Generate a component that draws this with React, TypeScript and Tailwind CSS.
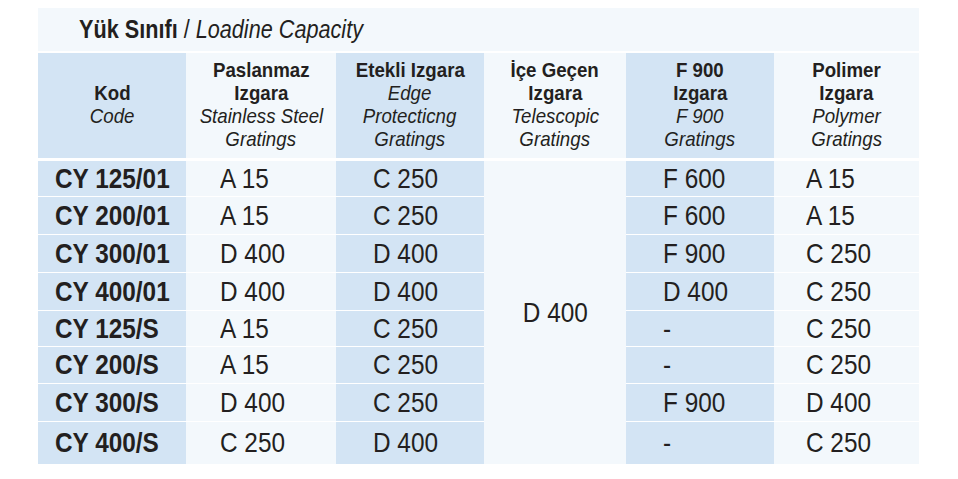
import React from "react";

const rows: [string, string, string, string, string][] = [
  ["CY 125/01", "A 15", "C 250", "F 600", "A 15"],
  ["CY 200/01", "A 15", "C 250", "F 600", "A 15"],
  ["CY 300/01", "D 400", "D 400", "F 900", "C 250"],
  ["CY 400/01", "D 400", "D 400", "D 400", "C 250"],
  ["CY 125/S", "A 15", "C 250", "-", "C 250"],
  ["CY 200/S", "A 15", "C 250", "-", "C 250"],
  ["CY 300/S", "D 400", "C 250", "F 900", "D 400"],
  ["CY 400/S", "C 250", "D 400", "-", "C 250"],
];

const font = { fontFamily: '"Liberation Sans", Arial, sans-serif' };

function Head({ bold, italic, blue }: { bold: string[]; italic: string[]; blue: boolean }) {
  return (
    <div
      className={`flex flex-col items-center justify-center pb-[3px] text-center leading-[23px] whitespace-nowrap ${
        blue ? "bg-[#d3e4f4]" : "bg-[#f3f8fc]"
      }`}
    >
      {bold.map((b) => (
        <div key={b} className="font-bold text-[21px] inline-block scale-x-[0.89] origin-center">
          {b}
        </div>
      ))}
      {italic.map((i) => (
        <div key={i} className="italic text-[21px] inline-block scale-x-[0.89] origin-center">
          {i}
        </div>
      ))}
    </div>
  );
}

function Cell({ text, className }: { text: string; className: string }) {
  return (
    <div className={`flex items-center whitespace-nowrap ${className}`}>
      <span className="inline-block scale-x-[0.87] origin-left">{text}</span>
    </div>
  );
}

export default function App() {
  return (
    <div className="w-[958px] h-[479px] bg-white pt-[8px] pl-[38px] text-[#231f20]" style={font}>
      <div className="w-[881px]">
        <div className="h-[43px] bg-[#f3f8fc] flex items-center pl-[41px] text-[25px] whitespace-nowrap">
          <span className="inline-block scale-x-[0.866] origin-left">
            <span className="font-bold">Yük Sınıfı</span>
            <span className="whitespace-pre"> / </span>
            <span className="italic">Loadine Capacity</span>
          </span>
        </div>
        <div className="mt-[2px] h-[105px] grid grid-cols-[148px_150px_148px_142px_148px_145px]">
          <Head bold={["Kod"]} italic={["Code"]} blue />
          <Head bold={["Paslanmaz", "Izgara"]} italic={["Stainless Steel", "Gratings"]} blue={false} />
          <Head bold={["Etekli Izgara"]} italic={["Edge", "Protecticng", "Gratings"]} blue />
          <Head bold={["İçe Geçen", "Izgara"]} italic={["Telescopic", "Gratings"]} blue={false} />
          <Head bold={["F 900", "Izgara"]} italic={["F 900", "Gratings"]} blue />
          <Head bold={["Polimer", "Izgara"]} italic={["Polymer", "Gratings"]} blue={false} />
        </div>
        <div className="mt-[3px] grid grid-cols-[148px_150px_148px_142px_148px_145px] grid-rows-[35px_37px_37px_37px_35px_36px_37px_42px] gap-y-px bg-white text-[28px] leading-none">
          {rows.map((r, i) => (
            <React.Fragment key={r[0]}>
              <div className="contents">
                <Cell text={r[0]} className="bg-[#d3e4f4] pl-[17px] font-bold col-start-1" />
                <Cell text={r[1]} className="bg-[#f3f8fc] pl-[34px] col-start-2" />
                <Cell text={r[2]} className="bg-[#d3e4f4] pl-[37px] col-start-3" />
                <Cell text={r[3]} className="bg-[#d3e4f4] pl-[37px] col-start-5" />
                <Cell text={r[4]} className="bg-[#f3f8fc] pl-[32px] col-start-6" />
              </div>
              {i === 0 && (
                <div className="col-start-4 row-start-1 row-span-8 bg-[#f3f8fc] flex items-center justify-center">
                  <span className="inline-block scale-x-[0.87] origin-center">D 400</span>
                </div>
              )}
            </React.Fragment>
          ))}
        </div>
      </div>
    </div>
  );
}
